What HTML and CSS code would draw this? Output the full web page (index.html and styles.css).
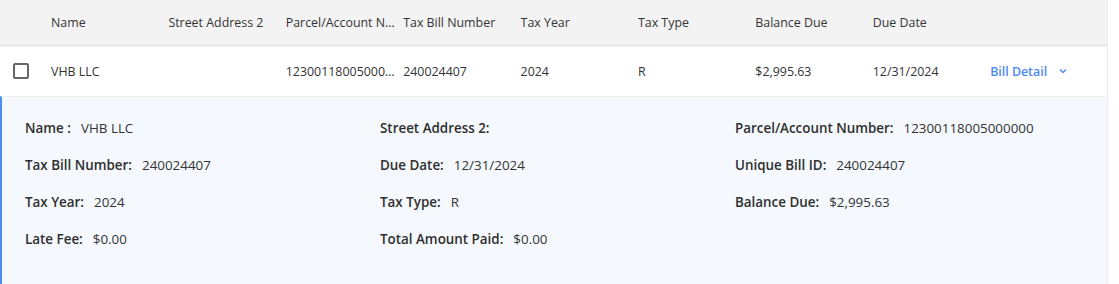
FILE: index.html
```html
<!DOCTYPE html>
<html>
<head>
<meta charset="utf-8">
<link rel="stylesheet" href="styles.css">
</head>
<body>
<div class="table">
  <div class="thead">
    <div class="cell check"></div>
    <div class="cell">Name</div>
    <div class="cell">Street Address 2</div>
    <div class="cell ellip">Parcel/Account Number</div>
    <div class="cell">Tax Bill Number</div>
    <div class="cell">Tax Year</div>
    <div class="cell">Tax Type</div>
    <div class="cell">Balance Due</div>
    <div class="cell">Due Date</div>
    <div class="cell"></div>
  </div>
  <div class="trow">
    <div class="cell check"><span class="box"></span></div>
    <div class="cell">VHB LLC</div>
    <div class="cell"></div>
    <div class="cell ellip">12300118005000000</div>
    <div class="cell">240024407</div>
    <div class="cell">2024</div>
    <div class="cell">R</div>
    <div class="cell">$2,995.63</div>
    <div class="cell">12/31/2024</div>
    <div class="cell link">Bill Detail
      <svg class="chev" width="8" height="6" viewBox="0 0 8 6"><path d="M1 1.5 L4 4.5 L7 1.5" fill="none" stroke="#4a8af4" stroke-width="1.4"/></svg>
    </div>
  </div>
  <div class="detail">
    <div class="item"><span class="lbl">Name :</span><span class="val">VHB LLC</span></div>
    <div class="item"><span class="lbl">Street Address 2:</span><span class="val"></span></div>
    <div class="item"><span class="lbl">Parcel/Account Number:</span><span class="val">12300118005000000</span></div>
    <div class="item"><span class="lbl">Tax Bill Number:</span><span class="val">240024407</span></div>
    <div class="item"><span class="lbl">Due Date:</span><span class="val">12/31/2024</span></div>
    <div class="item"><span class="lbl">Unique Bill ID:</span><span class="val">240024407</span></div>
    <div class="item"><span class="lbl">Tax Year:</span><span class="val">2024</span></div>
    <div class="item"><span class="lbl">Tax Type:</span><span class="val">R</span></div>
    <div class="item"><span class="lbl">Balance Due:</span><span class="val">$2,995.63</span></div>
    <div class="item"><span class="lbl">Late Fee:</span><span class="val">$0.00</span></div>
    <div class="item"><span class="lbl">Total Amount Paid:</span><span class="val">$0.00</span></div>
  </div>
</div>
</body>
</html>
```
FILE: styles.css
```css
html, body {
  margin: 0;
  padding: 0;
  background: #fff;
}
body {
  font-family: "Open Sans", "Noto Sans", sans-serif;
  font-size: 12.4px;
  color: #333;
}
.table {
  width: 1107px;
  border-right: 1px solid #ececec;
  height: 284px;
  overflow: hidden;
}
.thead, .trow {
  display: grid;
  grid-template-columns: 51px repeat(8, 117.4px) 1fr;
  align-items: center;
}
.thead {
  height: 45px;
  background: #f3f3f3;
  border-bottom: 1px solid #e0e0e0;
  box-shadow: 0 1px 2px rgba(0,0,0,0.06);
  position: relative;
}
.trow {
  height: 50px;
  background: #fff;
}
.cell {
  white-space: nowrap;
  overflow: hidden;
  padding-right: 5px;
}
.ellip {
  text-overflow: ellipsis;
}
.check {
  display: flex;
  justify-content: flex-start;
  padding-left: 13px;
}
.box {
  width: 12px;
  height: 12px;
  border: 2px solid #666;
  border-radius: 2px;
  display: block;
}
.link {
  color: #4a8af4;
  font-weight: 600;
  display: flex;
  align-items: center;
  gap: 12px;
}
.detail {
  background: #f5f9fe;
  border-left: 2px solid #4a8ff0;
  border-top: 1px solid #ececec;
  display: grid;
  grid-template-columns: 355px 355px 1fr;
  grid-auto-rows: 37px;
  align-items: center;
  padding: 12px 0 0 23px;
  height: 200px;
  font-size: 13.4px;
}
.item {
  display: flex;
  gap: 10px;
}
.lbl {
  font-weight: 600;
  color: #2f2f2f;
}
.val {
  color: #333;
}
```
